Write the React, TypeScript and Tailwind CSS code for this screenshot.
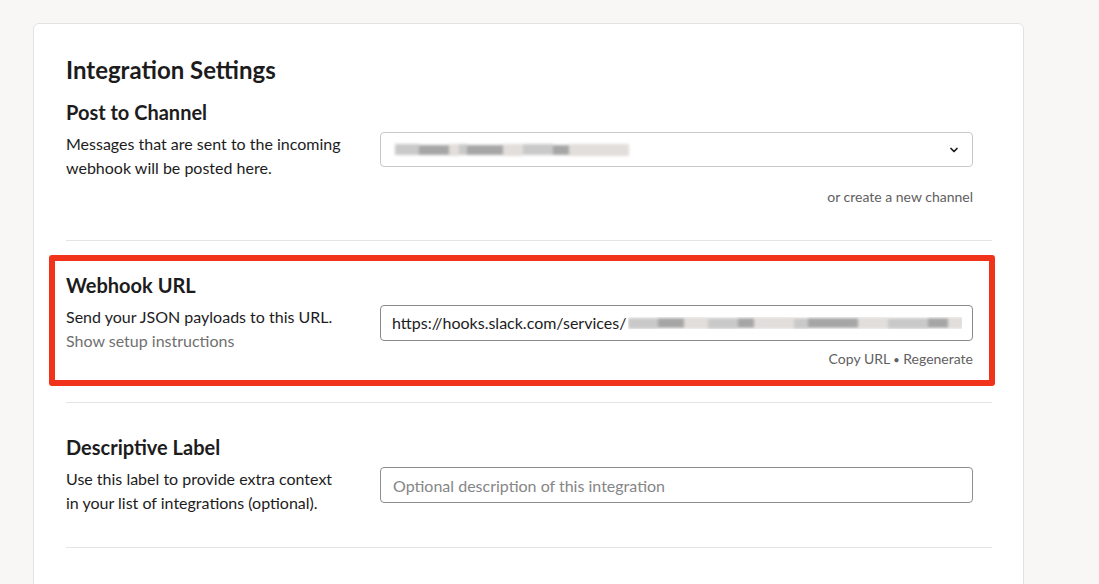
import { ChevronDown } from 'lucide-react';

const Blur: React.FC<{ widths: number[] }> = ({ widths }) => (
  <div className="flex items-center blur-[1.5px]">
    {widths.map((w, i) => (
      <span
        key={i}
        className={
          i % 3 === 1
            ? 'h-[10px] shrink-0 bg-[#a6a6a6]'
            : i % 3 === 2
              ? 'h-[12px] shrink-0 bg-[#e2dedb]'
              : 'h-[11px] shrink-0 bg-[#c9c9c9]'
        }
        style={{ width: w }}
      />
    ))}
  </div>
);

const Section: React.FC<{
  title: string;
  left: React.ReactNode;
  right: React.ReactNode;
}> = ({ title, left, right }) => (
  <div className="flex gap-9 pr-[19px]">
    <div className="w-[278px] shrink-0">
      <h3 className="text-[20px] leading-[28px] font-bold text-[#1d1c1d]">{title}</h3>
      <div className="mt-[6px] text-[16px] leading-6 text-[#1d1c1d]">{left}</div>
    </div>
    <div className="min-w-0 flex-1 pt-[34px]">{right}</div>
  </div>
);

export default function App() {
  return (
    <div className="h-[584px] overflow-hidden bg-[#f8f7f5] pl-[33px] pt-[23px] font-['Lato',sans-serif]">
      <div className="min-h-[600px] w-[991px] rounded-t-md border border-[#e2e2e2] bg-white pl-[32px] pr-[31px] pt-[30px]">
        <h2 className="text-[24px] leading-8 font-bold text-[#1d1c1d]">Integration Settings</h2>

        <div className="mt-[12px] border-b border-[#e4e4e4] pb-[33px]">
          <Section
            title="Post to Channel"
            left={<p>Messages that are sent to the incoming webhook will be posted here.</p>}
            right={
              <div>
                <div className="flex h-[35px] items-center justify-between rounded border border-[#c8c8c8] pl-[14px] pr-[12px]">
                  <Blur widths={[24, 30, 10, 8, 36, 20, 30, 16, 60]} />
                  <ChevronDown className="h-3 w-3 text-[#1d1c1d]" strokeWidth={3.5} />
                </div>
                <p className="mt-[20px] text-right text-[14px] leading-5 text-[#616061]">or create a new channel</p>
              </div>
            }
          />
        </div>

        <div className="relative border-b border-[#e4e4e4] pt-[30px] pb-[32px]">
          <div className="pointer-events-none absolute left-[-17px] right-[-3px] top-[14px] bottom-[16px] rounded-[3px] border-[6px] border-[#f2331c]" />
          <Section
            title="Webhook URL"
            left={
              <>
                <p>Send your JSON payloads to this URL.</p>
                <p className="text-[#707070]">Show setup instructions</p>
              </>
            }
            right={
              <div>
                <div className="flex h-9 items-center overflow-hidden rounded border border-[#8a8a8a] pl-[11px] pr-[10px] text-[16px] text-[#1d1c1d]">
                  <span className="shrink-0">https://hooks.slack.com/services/</span>
                  <div className="ml-[2px] min-w-0 flex-1 overflow-hidden">
                    <Blur widths={[30, 26, 24, 30, 16, 40, 14, 50, 30, 40, 20, 30]} />
                  </div>
                </div>
                <p className="mt-2 text-right text-[14px] leading-5 text-[#616061]">
                  Copy URL <span className="text-[11px]">•</span> Regenerate
                </p>
              </div>
            }
          />
        </div>

        <div className="border-b border-[#e4e4e4] pt-[30px] pb-[32px]">
          <Section
            title="Descriptive Label"
            left={<p>Use this label to provide extra context in your list of integrations (optional).</p>}
            right={
              <input
                readOnly
                placeholder="Optional description of this integration"
                className="h-9 w-full rounded border border-[#8e8e8e] px-[12px] text-[16px] text-[#1d1c1d] outline-none placeholder:text-[#868686]"
              />
            }
          />
        </div>
      </div>
    </div>
  );
}
